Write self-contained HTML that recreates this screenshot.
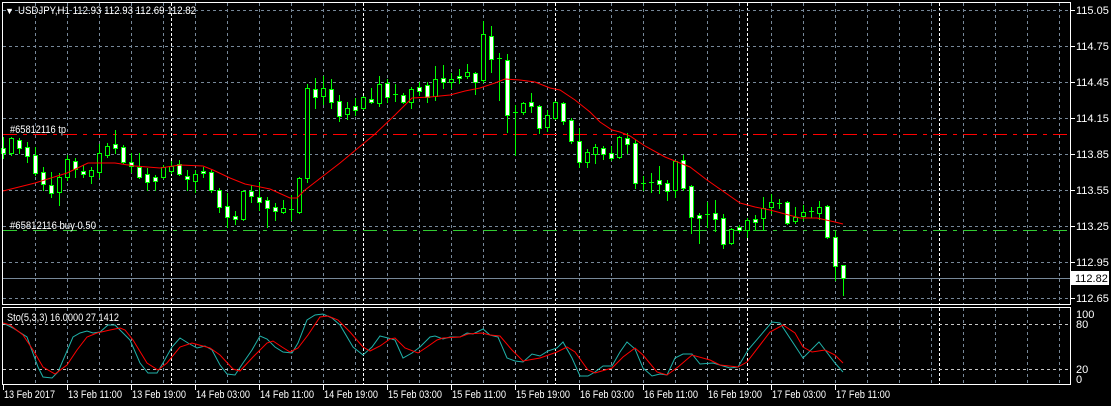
<!DOCTYPE html>
<html><head><meta charset="utf-8"><style>
html,body{margin:0;padding:0;background:#000;width:1111px;height:406px;overflow:hidden}
svg{display:block}
text{font-family:"Liberation Sans",sans-serif;font-size:11px;fill:#fff}
</style></head><body>
<svg id="s" width="1111" height="406" xmlns="http://www.w3.org/2000/svg" shape-rendering="crispEdges">
<rect width="1111" height="406" fill="#000"/>
<g id="grid"></g>
<g id="cand"></g>
<g id="over"></g>
<rect x="2.5" y="2.5" width="1068" height="302" fill="none" stroke="#fff"/>
<rect x="2.5" y="307.5" width="1068" height="77" fill="none" stroke="#fff"/>
<text x="5" y="14" style="font-size:9px">&#9660;</text>
<text x="18" y="14" textLength="178" lengthAdjust="spacingAndGlyphs">USDJPY,H1  112.93 112.93 112.69 112.82</text>
<text x="10" y="133" textLength="56" lengthAdjust="spacingAndGlyphs">#65812116 tp</text>
<text x="10" y="229" textLength="86" lengthAdjust="spacingAndGlyphs">#65812116 buy 0.50</text>
<text x="7" y="321" textLength="112" lengthAdjust="spacingAndGlyphs">Sto(5,3,3) 16.0000 27.1412</text>
<rect x="1071" y="271" width="38" height="14" fill="#fff"/>
<text x="1075" y="282" style="fill:#000">112.82</text>
<g id="lbl"></g>
</svg>
<script>
var NS="http://www.w3.org/2000/svg";
function el(p,t,a,txt){var e=document.createElementNS(NS,t);for(var k in a)e.setAttribute(k,a[k]);if(txt)e.textContent=txt;document.getElementById(p).appendChild(e);return e;}
for(var x=35;x<1071;x+=32){
  el('grid','line',{x1:x+.5,y1:3,x2:x+.5,y2:305,stroke:'#778899','stroke-dasharray':'3,3'});
  el('grid','line',{x1:x+.5,y1:308,x2:x+.5,y2:385,stroke:'#778899','stroke-dasharray':'3,3'});
}
[171,363,555,747,939].forEach(function(x){
  el('grid','line',{x1:x+.5,y1:3,x2:x+.5,y2:305,stroke:'#fff','stroke-dasharray':'3,2'});
  el('grid','line',{x1:x+.5,y1:308,x2:x+.5,y2:385,stroke:'#fff','stroke-dasharray':'3,2'});
});
var prices=["115.05","114.75","114.45","114.15","113.85","113.55","113.25","112.95","112.65"];
prices.forEach(function(p,i){var y=10+i*36;
  el('grid','line',{x1:3,y1:y+.5,x2:1071,y2:y+.5,stroke:'#778899','stroke-dasharray':'3,3'});
  el('grid','line',{x1:1071,y1:y+.5,x2:1075,y2:y+.5,stroke:'#fff'});
  el('lbl','text',{x:1076,y:y+4},p);
});
[324,369].forEach(function(y){el('grid','line',{x1:3,y1:y+.5,x2:1071,y2:y+.5,stroke:'#c8c8c8','stroke-dasharray':'3,3'});});
[["100",318],["80",328],["20",373],["0",383]].forEach(function(a){el('lbl','text',{x:1076,y:a[1]},a[0]);});
var tl=["13 Feb 2017","13 Feb 11:00","13 Feb 19:00","14 Feb 03:00","14 Feb 11:00","14 Feb 19:00","15 Feb 03:00","15 Feb 11:00","15 Feb 19:00","16 Feb 03:00","16 Feb 11:00","16 Feb 19:00","17 Feb 03:00","17 Feb 11:00"];
tl.forEach(function(t,i){var x=3+64*i;el('lbl','line',{x1:x+.5,y1:385,x2:x+.5,y2:390,stroke:'#fff'});el('lbl','text',{x:x+1,y:398,textLength:(i==0?51:54),lengthAdjust:'spacingAndGlyphs'},t);});
el('grid','line',{x1:3,y1:278.5,x2:1071,y2:278.5,stroke:'#778899'});
el('grid','line',{x1:3,y1:134.5,x2:1071,y2:134.5,stroke:'#ff0000','stroke-dasharray':'14,6,4,6'});
el('grid','line',{x1:3,y1:230.5,x2:1071,y2:230.5,stroke:'#32cd32','stroke-dasharray':'14,6,4,6'});
var C=[[137,158,148,153,'w'],[137,155,138,153,'b'],[138,153,140,148,'w'],[142,162,147,156,'w'],[147,175,155,173,'w'],[167,190,172,184,'w'],[172,197,185,193,'w'],[173,205,177,192,'b'],[155,180,159,177,'b'],[158,177,161,169,'w'],
[165,177,171,174,'w'],[167,183,170,176,'b'],[144,177,153,172,'b'],[143,157,146,155,'b'],[130,153,144,148,'w'],[145,163,147,162,'w'],[153,172,162,166,'w'],[153,178,167,177,'w'],[168,190,174,182,'w'],[175,190,177,181,'w'],
[165,178,167,177,'b'],[161,173,166,171,'b'],[160,175,164,174,'w'],[170,190,176,179,'w'],[170,192,174,181,'b'],[167,177,171,173,'w'],[170,192,172,190,'w'],[188,212,190,207,'w'],[193,227,206,217,'w'],[211,224,216,219,'w'],
[190,220,191,219,'b'],[185,202,191,196,'w'],[182,210,197,202,'w'],[197,227,200,208,'w'],[203,220,207,211,'w'],[200,213,208,212,'b'],[195,220,209,209,'d'],[177,213,178,212,'b'],[84,182,88,178,'b'],[78,108,89,97,'w'],
[76,104,88,96,'b'],[79,108,89,102,'w'],[95,121,101,116,'w'],[102,119,108,114,'b'],[98,115,106,110,'w'],[96,109,97,108,'b'],[88,103,99,102,'w'],[76,106,84,103,'b'],[79,102,83,97,'w'],[84,101,94,94,'d'],
[93,103,95,102,'w'],[87,108,89,102,'b'],[82,95,87,91,'w'],[82,102,85,97,'w'],[66,100,79,96,'b'],[65,88,78,82,'w'],[73,88,79,82,'b'],[69,83,76,78,'w'],[64,78,72,76,'b'],[72,94,73,82,'w'],
[21,82,34,80,'b'],[26,72,36,59,'w'],[53,100,58,58,'d'],[54,132,60,115,'w'],[105,155,112,112,'d'],[102,114,103,112,'b'],[93,112,102,106,'w'],[105,133,106,128,'w'],[110,131,115,127,'b'],[101,119,102,118,'b'],
[102,124,103,121,'w'],[118,143,120,141,'w'],[128,167,141,162,'w'],[149,167,152,162,'b'],[144,163,147,154,'b'],[146,159,148,154,'w'],[146,160,153,158,'w'],[136,158,137,157,'b'],[133,153,138,144,'w'],[140,188,143,183,'w'],
[176,190,183,183,'d'],[173,192,182,182,'d'],[166,193,180,184,'w'],[180,200,183,191,'w'],[160,197,161,190,'b'],[155,190,160,188,'w'],[185,233,186,217,'w'],[213,243,215,218,'w'],[202,227,214,214,'d'],[200,231,213,219,'w'],
[214,248,218,244,'w'],[228,244,229,243,'b'],[225,232,227,230,'w'],[218,237,220,230,'b'],[215,230,219,222,'w'],[197,230,208,218,'b'],[194,213,202,207,'b'],[199,208,203,203,'d'],[201,224,202,223,'w'],[207,223,217,221,'b'],
[205,220,212,216,'b'],[207,217,211,211,'d'],[201,219,207,213,'b'],[205,238,206,237,'w'],[231,280,237,266,'w'],[265,295,265,278,'w']];
var G='#00ff00';
C.forEach(function(c,i){var x=3+8*i;
  el('cand','line',{x1:x+.5,y1:c[0],x2:x+.5,y2:c[1]+1,stroke:G});
  if(c[4]=='d'){el('cand','line',{x1:x-2,y1:c[2]+.5,x2:x+3,y2:c[2]+.5,stroke:G});}
  else el('cand','rect',{x:x-1.5,y:c[2]+.5,width:4,height:Math.max(1,c[3]-c[2]),fill:c[4]=='w'?'#fff':'#000',stroke:G});
});
function pl(pts,col,g){el(g,'polyline',{points:pts,fill:'none',stroke:col,'stroke-width':1,'shape-rendering':'auto'});}
pl("3,191 35,183 67,173 88,163 115,163 135,166 160,168 180,165 203,166 213,170 230,178 245,184 270,189 290,198 297,198 305,190 340,163 375,134 395,115 412,98 430,97 450,95 465,91 480,88 495,83 505,79 520,80 535,82 550,88 560,90 575,100 590,112 600,122 612,130 620,132 630,136 645,146 665,157 690,167 707,180 740,203 755,207 770,210 785,214 800,218 817,218 835,222 843,224",'#ff0000','over');
pl("3,323 13,328 27,337 38,367 43,377 52,378 58,372 73,337 80,333 87,331 93,333 100,332 108,325 115,325 130,340 140,363 148,373 157,373 163,363 172,347 180,338 188,343 197,348 205,346 212,350 220,365 227,374 235,375 243,363 252,350 260,336 267,339 275,347 283,352 292,353 298,343 307,320 315,315 323,314 332,318 340,325 353,347 363,355 372,347 380,336 388,338 395,340 403,358 412,353 420,347 430,337 435,336 443,339 450,337 460,337 467,333 473,334 483,329 490,335 498,337 507,358 515,361 523,362 532,354 540,356 548,351 557,348 563,342 572,358 580,376 588,376 595,372 603,366 612,366 620,352 627,342 635,349 643,368 652,376 660,374 667,375 675,358 683,354 692,354 700,364 713,363 730,368 738,367 748,350 772,322 780,323 803,358 819,342 835,363 843,372",'#20b2aa','over');
pl("3,323 10,325 23,335 33,350 43,367 55,374 67,365 77,350 87,337 97,333 110,330 120,328 125,330 133,340 147,363 158,370 167,363 180,347 192,343 210,348 220,355 233,369 240,371 253,357 267,343 273,341 282,347 290,352 298,348 308,335 320,317 328,316 338,320 350,332 363,347 370,351 380,346 390,339 395,338 405,348 418,353 427,347 437,340 443,338 460,337 468,334 482,333 490,335 500,336 512,350 523,361 540,358 557,352 567,347 575,352 588,370 595,373 612,368 623,357 635,348 643,355 657,372 667,375 678,367 692,355 710,360 720,365 738,367 747,362 770,332 783,325 795,333 803,347 812,352 825,350 835,355 843,363",'#ff0000','over');
</script>
</body></html>
